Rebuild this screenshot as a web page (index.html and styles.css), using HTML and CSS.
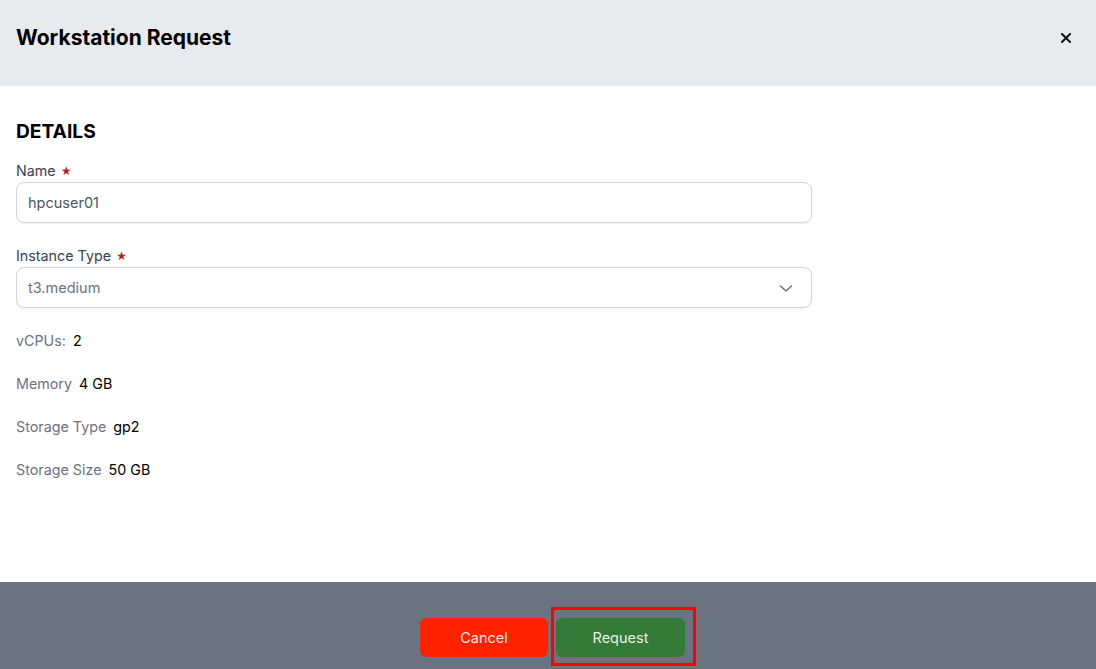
FILE: index.html
```html
<!DOCTYPE html>
<html lang="en">

<head>
  <meta charset="UTF-8">
  <meta name="viewport" content="width=device-width, initial-scale=1.0">
  <title>Workstation Request</title>
  <link rel="stylesheet" href="styles.css">
</head>

<body>
  <div class="modal">
    <div class="modal-header">
      <h1 class="modal-title">Workstation Request</h1>
      <button class="close-btn" aria-label="Close">
        <svg width="10" height="10" viewBox="0 0 10 10">
          <path d="M1 1 L9 9 M9 1 L1 9" stroke="#111" stroke-width="2" stroke-linecap="square" />
        </svg>
      </button>
    </div>

    <div class="modal-body">
      <h2 class="section-title">DETAILS</h2>

      <div class="field">
        <label class="field-label">Name <span class="required">&#9733;</span></label>
        <div class="input">hpcuser01</div>
      </div>

      <div class="field">
        <label class="field-label">Instance Type <span class="required">&#9733;</span></label>
        <div class="input select">
          <span class="placeholder">t3.medium</span>
          <svg width="16" height="16" viewBox="0 0 16 16">
            <path d="M2 5.5 L8 11 L14 5.5" fill="none" stroke="#6b7280" stroke-width="1.5" />
          </svg>
        </div>
      </div>

      <div class="info-list">
        <div class="info-row"><span class="info-key">vCPUs:</span><span class="info-val">2</span></div>
        <div class="info-row"><span class="info-key">Memory</span><span class="info-val">4 GB</span></div>
        <div class="info-row"><span class="info-key">Storage Type</span><span class="info-val">gp2</span></div>
        <div class="info-row"><span class="info-key">Storage Size</span><span class="info-val">50 GB</span></div>
      </div>
    </div>

    <div class="modal-footer">
      <button class="btn btn-cancel">Cancel</button>
      <button class="btn btn-request">Request</button>
      <div class="highlight"></div>
    </div>
  </div>
</body>

</html>
```

FILE: styles.css
```css
html,
body {
  margin: 0;
  padding: 0;
  height: 100%;
  font-family: Inter, "Noto Sans", sans-serif;
  color: #111827;
}

.modal {
  display: flex;
  flex-direction: column;
  height: 669px;
  overflow: hidden;
  background: #fff;
}

.modal-header {
  height: 86px;
  flex-shrink: 0;
  background: #e8ebee;
  display: flex;
  align-items: center;
  justify-content: space-between;
  padding: 0 25px 10px 16px;
  box-sizing: border-box;
}

.modal-title {
  margin: 0;
  font-size: 21px;
  font-weight: 700;
  line-height: 28px;
  color: #000;
}

.close-btn {
  border: none;
  background: transparent;
  padding: 0;
  width: 10px;
  height: 10px;
  cursor: pointer;
  display: flex;
}

.modal-body {
  flex: 1;
  padding: 31px 16px 0;
}

.section-title {
  margin: 0 0 15px;
  font-size: 19.2px;
  font-weight: 700;
  line-height: 28px;
  color: #000;
}

.field {
  width: 796px;
  margin-bottom: 22px;
}

.field-label {
  display: block;
  padding-top: 1px;
  font-size: 14.3px;
  line-height: 20px;
  color: #374151;
}

.required {
  color: #b91c1c;
  font-size: 10.5px;
  margin-left: 1px;
  vertical-align: 1px;
}

.input {
  height: 41px;
  box-sizing: border-box;
  border: 1px solid #d1d5db;
  border-radius: 8px;
  box-shadow: 0 1px 2px rgba(0, 0, 0, 0.06);
  padding: 0 11px;
  display: flex;
  align-items: center;
  font-size: 14.5px;
  color: #4b5563;
}

.select {
  justify-content: space-between;
  padding-right: 17px;
}

.placeholder {
  color: #6b7280;
}

.info-list {
  display: flex;
  flex-direction: column;
  gap: 23px;
  padding-top: 1px;
}

.info-row {
  display: flex;
  gap: 7px;
  font-size: 14.3px;
  line-height: 20px;
}

.info-key {
  color: #6b7280;
}

.info-val {
  color: #000;
}

.modal-footer {
  position: relative;
  height: 87px;
  flex-shrink: 0;
  background: #6b7280;
  display: flex;
  justify-content: center;
  align-items: flex-start;
  gap: 8px;
  padding: 36px 0 0 9px;
  box-sizing: border-box;
}

.btn {
  width: 128px;
  height: 39px;
  border: none;
  border-radius: 6px;
  font-family: Inter, "Noto Sans", sans-serif;
  font-size: 14.5px;
  cursor: pointer;
}

.btn-cancel {
  background: #ff2200;
  color: #fde8e4;
}

.btn-request {
  width: 129px;
  background: #357a38;
  color: #e6f2e6;
}

/* annotation box round the request button */
.highlight {
  position: absolute;
  left: 551px;
  top: 25px;
  width: 145px;
  height: 59px;
  border: 3px solid #ff0000;
  box-sizing: border-box;
  pointer-events: none;
}
```
